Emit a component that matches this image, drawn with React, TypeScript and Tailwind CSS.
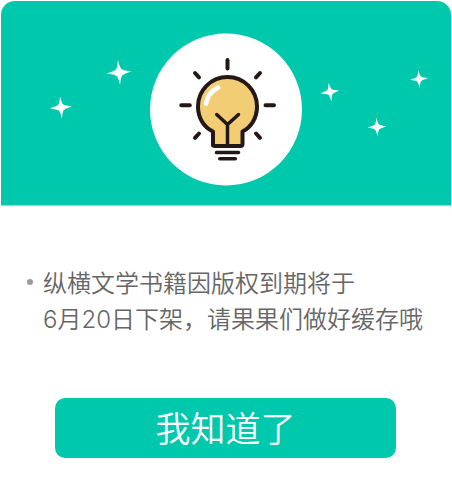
const stars = [
  { x: 60, y: 106.5, size: 11, tilt: -5 },
  { x: 118, y: 71.5, size: 12.5, tilt: -5 },
  { x: 329, y: 91, size: 9.5, tilt: -9 },
  { x: 376, y: 126, size: 9.5, tilt: -3 },
  { x: 418, y: 78, size: 9, tilt: -4 },
];

function Illustration() {
  return (
    <svg viewBox="0 0 450 204" className="block h-[204px] w-full" aria-hidden="true">
      {stars.map((s) => (
        <path
          key={s.x}
          fill="#fff"
          transform={`translate(${s.x} ${s.y}) rotate(${s.tilt}) scale(${s.size})`}
          d="M0-1Q.12-.26.28-.22Q.4-.14 1 0Q.4.14.28.22Q.12.26 0 1Q-.12.26-.28.22Q-.4.14-1 0Q-.4-.14-.28-.22Q-.12-.26 0-1Z"
        />
      ))}
      <circle cx="225" cy="108.5" r="76" fill="#fff" />
      <g transform="translate(139 24)" fill="none" stroke="#231815" strokeWidth="4" strokeLinecap="round" strokeLinejoin="round">
        <path d="M87.500 35v8.500M55 48l4 4.300M120 48l-4 4.300M41.300 80.200h8.500M125.500 80.200h8.500M59 108.500l-4 4.300M116 108.500l4 4.300" />
        <path
          fill="#f3cd74"
          d="M73 120.500V106.500C63.500 102 58 92.500 58 81.500a29.500 29.500 0 0 1 59 0c0 11-5.500 20.500-14.500 25V119a2 2 0 0 1-2 2H75a2 2 0 0 1-2-2Z"
        />
        <path strokeWidth="3.500" d="M76.700 89.500L87.500 99.500L98.500 89.500M87.500 99.500V121" />
        <path stroke="#fff" strokeWidth="4.800" d="M66 78.500C67.200 71.500 71 66.200 78 62.700" />
        <path strokeWidth="3.600" d="M76.500 127.500h22M79.800 133.700h15.500" />
      </g>
    </svg>
  );
}

export default function App() {
  return (
    <main className="bg-white pb-[26px] font-['Inter','Noto_Sans_CJK_SC',sans-serif]">
      <header className="px-px pt-px">
        <div className="rounded-t-[14px] border-b border-[#7fe3d6] bg-[#00c8ad]">
          <Illustration />
        </div>
      </header>
      <ul className="mt-[60px] px-[27px]">
        <li className="flex gap-[10px] text-2xl leading-9 font-[350] text-[#666]">
          <span className="mt-[13px] size-[6px] shrink-0 rounded-full bg-[#999]" />
          <p className="whitespace-nowrap">
            纵横文学书籍因版权到期将于
            <br />
            6月20日下架，请果果们做好缓存哦
          </p>
        </li>
      </ul>
      <div className="mt-[60px] pr-14 pl-[55px]">
        <button type="button" className="block h-[60px] w-full rounded-[10px] bg-[#00c8ad] text-[35px] leading-[62px] font-[350] text-white">
          我知道了
        </button>
      </div>
    </main>
  );
}
